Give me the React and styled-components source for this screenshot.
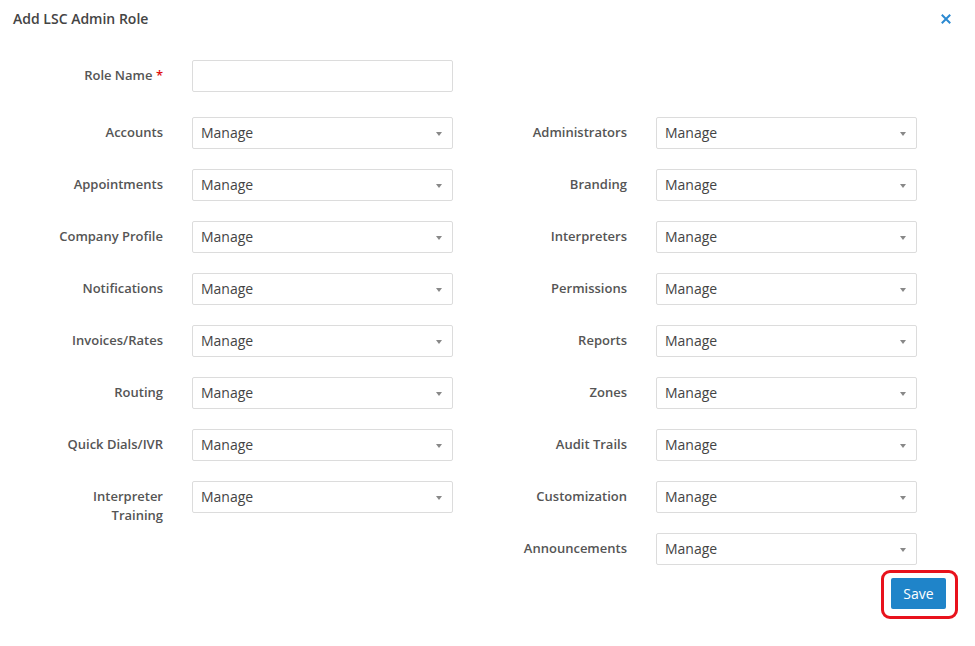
import React, { useState } from 'react';
import styled, { createGlobalStyle } from 'styled-components';

const GlobalStyle = createGlobalStyle`
  html, body {
    margin: 0;
    padding: 0;
    background: #fff;
    font-family: 'Open Sans', 'Liberation Sans', sans-serif;
  }
`;

const leftFields = [
  'Accounts',
  'Appointments',
  'Company Profile',
  'Notifications',
  'Invoices/Rates',
  'Routing',
  'Quick Dials/IVR',
  'Interpreter Training',
];

const rightFields = [
  'Administrators',
  'Branding',
  'Interpreters',
  'Permissions',
  'Reports',
  'Zones',
  'Audit Trails',
  'Customization',
  'Announcements',
];

const Field = ({ label }) =>
  label ? (
    <>
      <Label>{label}</Label>
      <Select>
        <span>Manage</span>
        <Caret />
      </Select>
    </>
  ) : (
    <>
      <span />
      <span />
    </>
  );

const App = () => {
  const [roleName, setRoleName] = useState('');
  const rows = Math.max(leftFields.length, rightFields.length);

  return (
    <>
      <GlobalStyle />
      <Modal>
        <Header>
          <Title>Add LSC Admin Role</Title>
          <CloseButton type='button' aria-label='Close'>
            <svg width='10' height='10' viewBox='0 0 10 10'>
              <path d='M1.5 1.5 L8.5 8.5 M8.5 1.5 L1.5 8.5' stroke='#2b89d1' strokeWidth='2' strokeLinecap='square' />
            </svg>
          </CloseButton>
        </Header>
        <Form>
          <RoleRow>
            <Label>
              Role Name <Required>*</Required>
            </Label>
            <TextInput value={roleName} onChange={(e) => setRoleName(e.target.value)} />
          </RoleRow>
          <Grid>
            {Array.from({ length: rows }).map((_, i) => (
              <React.Fragment key={i}>
                <Field label={leftFields[i]} />
                <Field label={rightFields[i]} />
              </React.Fragment>
            ))}
          </Grid>
          <Footer>
            <Highlight>
              <SaveButton type='button'>Save</SaveButton>
            </Highlight>
          </Footer>
        </Form>
      </Modal>
    </>
  );
};

const Modal = styled.div`
  width: 975px;
  height: 646px;
  box-sizing: border-box;
  padding: 9px 13px 0 13px;
  background: #fff;
`;

const Header = styled.div`
  display: flex;
  align-items: center;
  justify-content: space-between;
  height: 20px;
`;

const Title = styled.h4`
  margin: 0;
  font-size: 14px;
  font-weight: 600;
  color: #444;
  line-height: 20px;
`;

const CloseButton = styled.button`
  display: flex;
  align-items: center;
  justify-content: center;
  width: 20px;
  height: 20px;
  margin-right: 6px;
  padding: 0;
  border: none;
  background: none;
  cursor: pointer;
`;

const Form = styled.div`
  padding-top: 31px;
`;

const RoleRow = styled.div`
  display: grid;
  grid-template-columns: 150px 261px;
  grid-auto-rows: 32px;
  column-gap: 29px;
  margin-bottom: 25px;
`;

const Grid = styled.div`
  display: grid;
  grid-template-columns: 150px 261px 145px 261px;
  grid-auto-rows: 32px;
  column-gap: 29px;
  row-gap: 20px;
`;

const Label = styled.label`
  text-align: right;
  font-size: 13px;
  font-weight: 600;
  color: #555;
  line-height: 19px;
  padding-top: 6px;
  padding-left: 37px;
`;

const Required = styled.span`
  color: #e01010;
`;

const TextInput = styled.input`
  box-sizing: border-box;
  height: 32px;
  width: 100%;
  border: 1px solid #dcdcdc;
  border-radius: 2px;
  padding: 0 8px;
  font-family: inherit;
  font-size: 14px;
  outline: none;
`;

const Select = styled.div`
  box-sizing: border-box;
  height: 32px;
  display: flex;
  align-items: center;
  justify-content: space-between;
  padding: 0 10px 2px 8px;
  border: 1px solid #dcdcdc;
  border-radius: 2px;
  font-size: 14px;
  color: #444;
  background: #fff;
`;

const Caret = styled.span`
  width: 0;
  height: 0;
  border-left: 3.5px solid transparent;
  border-right: 3.5px solid transparent;
  border-top: 4px solid #888;
  margin-top: 4px;
`;

const Footer = styled.div`
  display: flex;
  justify-content: flex-end;
  padding-right: 4px;
  margin-top: 5px;
`;

const Highlight = styled.div`
  border: 3px solid #e8121c;
  border-radius: 9px;
  padding: 5px 9px 7px 7px;
`;

const SaveButton = styled.button`
  display: block;
  width: 55px;
  height: 31px;
  border: none;
  border-radius: 2px;
  background: #1f84c9;
  color: #fff;
  font-family: inherit;
  font-size: 14px;
  cursor: pointer;
`;

export default App;
